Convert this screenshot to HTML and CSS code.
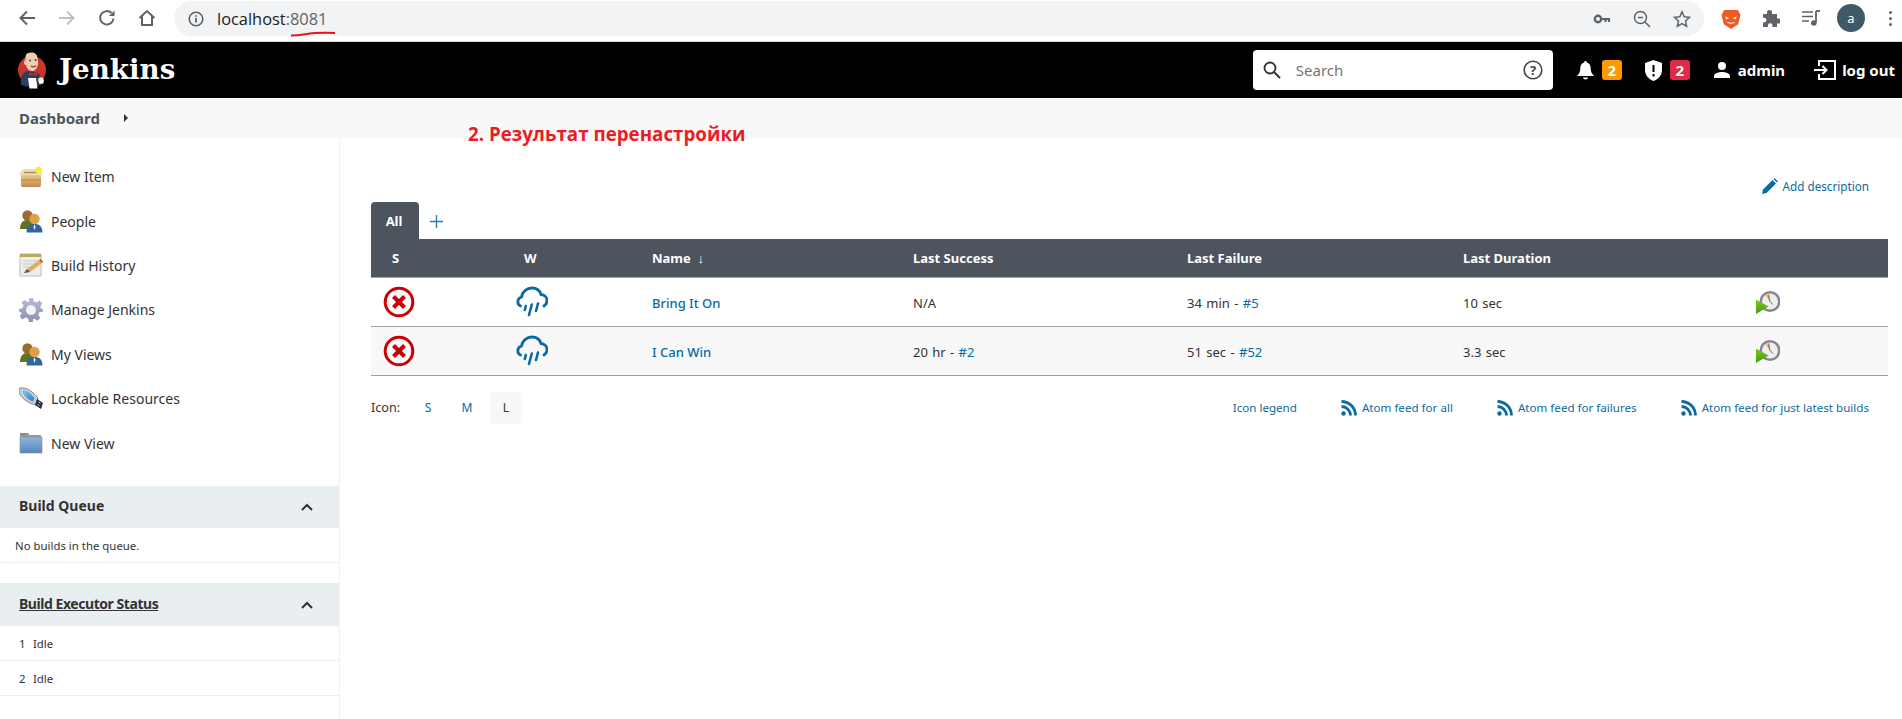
FILE: index.html
```html
<!DOCTYPE html>
<html lang="en">
<head>
<meta charset="utf-8">
<title>Dashboard [Jenkins]</title>
<link rel="stylesheet" href="styles.css">
</head>
<body>
<svg class="defs" width="0" height="0" aria-hidden="true">
  <defs>
    <linearGradient id="gBox" x1="0" y1="0" x2="0" y2="1"><stop offset="0" stop-color="#eec78a"/><stop offset="1" stop-color="#c08a45"/></linearGradient>
    <linearGradient id="gFolder" x1="0" y1="0" x2="0" y2="1"><stop offset="0" stop-color="#8fb4dc"/><stop offset="1" stop-color="#5a86bb"/></linearGradient>
    <linearGradient id="gGear" x1="0" y1="0" x2="0" y2="1"><stop offset="0" stop-color="#b9b9d6"/><stop offset="1" stop-color="#8f8fb4"/></linearGradient>
    <linearGradient id="gUsb" x1="0" y1="0" x2="1" y2="1"><stop offset="0" stop-color="#7cc4ee"/><stop offset="1" stop-color="#2d7fc6"/></linearGradient>
    <linearGradient id="gPlay" x1="0" y1="0" x2="0" y2="1"><stop offset="0" stop-color="#7ccc1e"/><stop offset="1" stop-color="#3f9a12"/></linearGradient>
    <symbol id="people" viewBox="0 0 24 24">
      <circle cx="8.500" cy="6.500" r="5.200" fill="#9a6b2c"/>
      <path d="M1 20c0-6 3-9 7.500-9s7 3 7 9z" fill="#5f7323"/>
      <circle cx="15.500" cy="10" r="5.200" fill="#e0a04a"/>
      <path d="M7.500 23.500c0-6 3-8.500 8-8.500s8 2.500 8 8.500z" fill="#30659f"/>
      <path d="M15.500 15l-1 3 1 3 1-3z" fill="#fff"/>
    </symbol>
    <symbol id="rain" viewBox="0 0 32 32">
      <path d="M4.500 20C1 18.500.5 12.500 5.500 11 6.500 5.500 11 2 16 2c4.500 0 7.800 2.500 9 6.500 3.500.2 6 3 6 6.200 0 2.300-1 4-3 5.300" fill="none" stroke="#0b6aa2" stroke-width="2.800" stroke-linecap="round"/>
      <path d="M9.800 20l-1 4M15.800 18.500l-2.800 10.500M22 17.500l-2 7.500" fill="none" stroke="#0b6aa2" stroke-width="2.600" stroke-linecap="round"/>
    </symbol>
    <symbol id="failed" viewBox="0 0 32 32">
      <circle cx="16" cy="16" r="13.800" fill="#fff" stroke="#cc0003" stroke-width="3"/>
      <path d="M10.500 10.500l11 11M21.500 10.500l-11 11" stroke="#cc0003" stroke-width="4.200"/>
    </symbol>
    <symbol id="clock" viewBox="0 0 24 24">
      <circle cx="14" cy="11.500" r="10.500" fill="#85829a"/>
      <circle cx="14" cy="11.500" r="8" fill="#efefef"/>
      <path d="M14 11.500V3.500a8 8 0 0 0-5 1.800z" fill="#e4c35f"/>
      <path d="M14 11.500l-1.500-6M14 11.500l3 3" stroke="#666" stroke-width="1"/>
      <path d="M0 9.500l12.500 7L0 24z" fill="url(#gPlay)"/>
    </symbol>
    <symbol id="feed" viewBox="0 0 16 16">
      <circle cx="2.500" cy="13.500" r="2.200" fill="#0b6aa2"/>
      <path d="M.5 6.500a9 9 0 0 1 9 9M.5 1.500a14 14 0 0 1 14 14" fill="none" stroke="#0b6aa2" stroke-width="2.800"/>
    </symbol>
    <symbol id="chev" viewBox="0 0 14 14">
      <path d="M2 10l5-5 5 5" fill="none" stroke="#333" stroke-width="2"/>
    </symbol>
  </defs>
</svg>

<div class="chrome">
  <div class="nav-icons">
    <svg class="ci" viewBox="0 0 18 18"><path d="M17 9H3M9 2.500L2.500 9 9 15.500" fill="none" stroke="#5f6368" stroke-width="2"/></svg>
    <svg class="ci" viewBox="0 0 18 18"><path d="M1 9h14M9 2.500L15.500 9 9 15.500" fill="none" stroke="#bdc1c6" stroke-width="2"/></svg>
    <svg class="ci" viewBox="0 0 18 18"><path d="M15.500 9.500A6.700 6.700 0 1 1 13.500 4" fill="none" stroke="#5f6368" stroke-width="2"/><path d="M16.500 1.500V7h-5.500z" fill="#5f6368"/></svg>
    <svg class="ci" viewBox="0 0 18 18"><path d="M1.500 9L9 2l7.500 7M4 7.500V16h10V7.500" fill="none" stroke="#5f6368" stroke-width="2"/></svg>
  </div>
  <div class="omnibox">
    <svg class="info" viewBox="0 0 16 16"><circle cx="8" cy="8" r="6.800" fill="none" stroke="#5f6368" stroke-width="1.600"/><path d="M8 7v4.500M8 4.200v1.600" stroke="#5f6368" stroke-width="1.800"/></svg>
    <span class="url">localhost<span class="port">:8081</span></span>
    <span class="spacer"></span>
    <svg class="oi" viewBox="0 0 18 18"><circle cx="5" cy="9" r="3.200" fill="none" stroke="#5f6368" stroke-width="2.400"/><path d="M8 9h9M12.500 9v3M16 9v3" stroke="#5f6368" stroke-width="2.200"/></svg>
    <svg class="oi" viewBox="0 0 18 18"><circle cx="7.500" cy="7.500" r="6" fill="none" stroke="#5f6368" stroke-width="1.500"/><path d="M12 12l5 5M5 7.500h5" stroke="#5f6368" stroke-width="1.500"/></svg>
    <svg class="oi" viewBox="0 0 18 18"><path d="M9 1.800l2.200 4.900 5.300.6-4 3.600 1.100 5.300L9 13.500l-4.600 2.700 1.100-5.300-4-3.600 5.300-.6z" fill="none" stroke="#5f6368" stroke-width="1.500"/></svg>
  </div>
  <div class="ext-icons">
    <svg class="ext" viewBox="0 0 20 22"><path d="M3 2h14l3 5-2.500 10L10 22 2.500 17 0 7z" fill="#ef5a22"/><path d="M4 9l4 1.500-3 1.500zM16 9l-4 1.500 3 1.500zM5 14c3 2 7 2 10 0-2 3.500-8 3.500-10 0z" fill="#fff"/></svg>
    <svg class="ext" viewBox="0 0 18 18"><path d="M1 5h4V3.500a2.500 2.500 0 0 1 5 0V5h5v4.500h1.500a2.500 2.500 0 0 1 0 5H15V18h-4.500v-1.500a2.300 2.300 0 0 0-4.600 0V18H1v-4.500h1a2.400 2.400 0 0 0 0-4.800H1z" fill="#5f6368"/></svg>
    <svg class="ext" viewBox="0 0 18 18"><path d="M0 3h11M0 7.500h11M0 12h7" stroke="#5f6368" stroke-width="1.600"/><path d="M14 2v11.500" stroke="#5f6368" stroke-width="1.800"/><circle cx="11.800" cy="14" r="2.800" fill="#5f6368"/><path d="M14 2h4" stroke="#5f6368" stroke-width="1.800"/></svg>
    <span class="avatar">a</span>
    <span class="dots"><i></i><i></i><i></i></span>
  </div>
</div>

<header class="topbar">
  <svg class="logo" viewBox="0 0 28 38">
    <circle cx="14" cy="19" r="14" fill="#c8352d"/>
    <path d="M3 34c-1-7 1-12 6-14l9 1c5 2 6 6 5 13l-8 3z" fill="#26435e"/>
    <path d="M9 2.500c5-2 10-1 10.500 4.500.5 3 1 5 .5 6.500-1 4-3 6.500-6 6.500-3 0-5.500-3-6-6-1.500 0-2.500-1.500-2-3.500.3-1 1-1 1.500-.8C7 7 7.500 3.500 9 2.500z" fill="#f2cdb0"/>
    <path d="M6.500 11c0-2 .3-3.500 1-4.800l1.300.8c-.5 1.300-.8 2.800-.8 4.500z" fill="#b9b2a8"/>
    <circle cx="12" cy="9.500" r=".9" fill="#333"/>
    <circle cx="17.500" cy="9" r=".9" fill="#333"/>
    <path d="M13 15c1.500 1 3.500 1 5-.3" fill="none" stroke="#8a3b2b" stroke-width="1.200"/>
    <path d="M11 21.500l4 1.500 4-2.500v4.500l-4-1.500-4 1.500z" fill="#d3202a"/>
    <path d="M10 27h8l1.500 10.500h-8z" fill="#fff"/>
    <circle cx="23" cy="29" r="2.800" fill="#f4ddc6"/>
    <path d="M20.500 30l5-1v3.500l-4 .5z" fill="#fff"/>
  </svg>
  <span class="brand">Jenkins</span>
  <span class="spacer"></span>
  <div class="searchbox">
    <svg class="s-ico" viewBox="0 0 18 18"><circle cx="7" cy="7" r="5.500" fill="none" stroke="#333" stroke-width="1.800"/><path d="M11 11l6 6" stroke="#333" stroke-width="2"/></svg>
    <span class="s-text">Search</span>
    <span class="spacer"></span>
    <svg class="s-help" viewBox="0 0 20 20"><circle cx="10" cy="10" r="8.800" fill="none" stroke="#444" stroke-width="1.600"/><text x="10" y="14.500" class="help-q">?</text></svg>
  </div>
  <div class="alerts">
    <svg class="bell" viewBox="0 0 17 20"><path d="M8.500 1c-.8 0-1.300.6-1.300 1.400C4.600 3 3.300 5 3.300 8c0 4-1 5.500-3 7.500V16h16.400v-.5c-2-2-3-3.500-3-7.500 0-3-1.300-5-3.900-5.600C9.800 1.600 9.300 1 8.500 1zM6 17.500a2.500 2 0 0 0 5 0z" fill="#fff"/></svg>
    <span class="badge badge-orange">2</span>
    <svg class="shield" viewBox="0 0 17 21"><path d="M8.500 0L17 3v7c0 5-3.500 9-8.500 11C3.500 19 0 15 0 10V3z" fill="#fff"/><path d="M8.500 5v7M8.500 14v2.500" stroke="#000" stroke-width="2"/></svg>
    <span class="badge badge-red">2</span>
    <svg class="user" viewBox="0 0 16 16"><circle cx="8" cy="4" r="4" fill="#fff"/><path d="M0 16v-2c0-2.700 5-4 8-4s8 1.300 8 4v2z" fill="#fff"/></svg>
    <span class="who">admin</span>
    <svg class="logout" viewBox="0 0 22 20"><path d="M5 6V1h16v18H5v-5" fill="none" stroke="#fff" stroke-width="2"/><path d="M0 10h12M8.500 6l4 4-4 4" fill="none" stroke="#fff" stroke-width="2"/></svg>
    <span class="who who-out">log out</span>
  </div>
</header>

<nav class="crumbs"><span class="crumb">Dashboard</span><span class="crumb-arrow"></span></nav>

<div class="note">2. Результат перенастройки</div>
<svg class="scribble" viewBox="0 0 46 6"><path d="M1 4.500c8 .5 14-2 24-2.500 7-.3 13-.5 20 0" fill="none" stroke="#e8141c" stroke-width="2"/></svg>

<div class="layout">
  <aside class="side">
    <ul class="tasks">
      <li class="task">
        <svg class="task-ico" viewBox="0 0 24 24"><path d="M0 9l4-5h16l4 5-3 2H3z" fill="#f3dcb3"/><path d="M2 10h20v10a2 2 0 0 1-2 2H4a2 2 0 0 1-2-2z" fill="url(#gBox)"/><path d="M5 7.500h13" stroke="#b98a4f" stroke-width="1.500"/><path d="M2 15h20" stroke="#a8743a" stroke-width=".7"/><circle cx="19.500" cy="5" r="3.300" fill="#f7ee3a"/></svg>
        New Item
      </li>
      <li class="task"><svg class="task-ico"><use href="#people"/></svg>People</li>
      <li class="task">
        <svg class="task-ico" viewBox="0 0 24 24"><path d="M1 1h21v22H1z" fill="#eeeeea" stroke="#bdbdbd"/><path d="M1 1h21v3H1z" fill="#b8ab62"/><path d="M4 8h15M4 11h15M4 14h8" stroke="#c8c8c8"/><path d="M5 20l3-4L20 7l3 3-12 9z" fill="#dcb062"/><path d="M20 7l3 3 1-1.500-2.500-2.500z" fill="#d33"/><path d="M5 20l3-4 3 3z" fill="#555"/></svg>
        Build History
      </li>
      <li class="task">
        <svg class="task-ico" viewBox="0 0 24 24"><path d="M10 0h4l.8 3.500 2.700 1.100 3-2 2.800 2.800-2 3 1.100 2.700L24 11v2.500l-3.600.8-1.100 2.700 2 3-2.800 2.800-3-2-1.700.7L14 24h-4l-.800-3.500-2.700-1.100-3 2-2.800-2.800 2-3L1.600 14 0 13.500V11l3.500-.8 1.100-2.700-2-3 2.800-2.500 3 2 1.800-.8z" fill="url(#gGear)"/><circle cx="12" cy="12" r="5" fill="#f2f2f6"/></svg>
        Manage Jenkins
      </li>
      <li class="task"><svg class="task-ico"><use href="#people"/></svg>My Views</li>
      <li class="task">
        <svg class="task-ico" viewBox="0 0 24 24"><path d="M1 1c7-1 13 4 18 10l-2 7C10 17 0 10 0 4z" fill="#c9ced6" stroke="#6b7280" stroke-width=".8"/><path d="M3.500 3.500c5 0 9 3 12 8l-1.500 3C9 13 4.500 9 3.500 3.500z" fill="url(#gUsb)"/><path d="M18 12l6 4-2 6-6-4z" fill="#2b2b2b"/><path d="M19.500 15l2 1.300M18.500 17.500l2 1.300" stroke="#ddd" stroke-width="1"/></svg>
        Lockable Resources
      </li>
      <li class="task">
        <svg class="task-ico" viewBox="0 0 24 24"><path d="M1 2h8l2 3h-10z" fill="#8b8b8b"/><path d="M1 4h21v2H1z" fill="#999"/><path d="M1 6h22v16H1z" fill="url(#gFolder)" stroke="#8a8f96" stroke-width=".6"/></svg>
        New View
      </li>
    </ul>

    <section class="pane pane-queue">
      <div class="pane-head"><span class="pane-title">Build Queue</span><svg class="chev"><use href="#chev"/></svg></div>
      <div class="pane-row pane-row-q">No builds in the queue.</div>
    </section>

    <section class="pane pane-exec">
      <div class="pane-head pane-head-tall"><span class="pane-title u">Build Executor Status</span><svg class="chev"><use href="#chev"/></svg></div>
      <div class="pane-row"><span class="num">1</span>Idle</div>
      <div class="pane-row"><span class="num">2</span>Idle</div>
    </section>
  </aside>

  <main class="content">
    <div class="desc-row">
      <a class="link add-desc"><svg class="pencil" viewBox="0 0 16 16"><path d="M0 16l1-4.500L10.500 2l3.500 3.500L4.500 15zM11.500 1l1-1 3.500 3.500-1 1z" fill="#0b6aa2"/></svg>Add description</a>
    </div>
    <div class="tabs">
      <span class="tab">All</span>
      <svg class="plus" viewBox="0 0 13 13"><path d="M6.500 0v13M0 6.500h13" stroke="#2b7cb3" stroke-width="1.400"/></svg>
    </div>
    <table class="jobs">
      <colgroup>
        <col class="c1"><col class="c2"><col class="c3"><col class="c4"><col class="c5"><col class="c6"><col>
      </colgroup>
      <thead>
        <tr>
          <th class="th-s">S</th><th class="th-w">W</th><th>Name&nbsp; ↓&nbsp;</th><th>Last Success</th><th>Last Failure</th><th>Last Duration</th><th></th>
        </tr>
      </thead>
      <tbody>
        <tr>
          <td class="td-s"><svg class="status"><use href="#failed"/></svg></td>
          <td class="td-w"><svg class="status"><use href="#rain"/></svg></td>
          <td><a class="link job">Bring It On</a></td>
          <td>N/A</td>
          <td>34 min - <a class="link">#5</a></td>
          <td>10 sec</td>
          <td><svg class="clock"><use href="#clock"/></svg></td>
        </tr>
        <tr class="alt">
          <td class="td-s"><svg class="status"><use href="#failed"/></svg></td>
          <td class="td-w"><svg class="status"><use href="#rain"/></svg></td>
          <td><a class="link job">I Can Win</a></td>
          <td>20 hr - <a class="link">#2</a></td>
          <td>51 sec - <a class="link">#52</a></td>
          <td>3.3 sec</td>
          <td><svg class="clock"><use href="#clock"/></svg></td>
        </tr>
      </tbody>
    </table>
    <div class="foot">
      <div class="sizes">
        <span class="size-label">Icon:</span>
        <a class="size link">S</a><a class="size link">M</a><span class="size size-on">L</span>
      </div>
      <div class="feeds">
        <a class="link">Icon legend</a>
        <a class="link feed"><svg class="feed-ico"><use href="#feed"/></svg>Atom feed for all</a>
        <a class="link feed"><svg class="feed-ico"><use href="#feed"/></svg>Atom feed for failures</a>
        <a class="link feed"><svg class="feed-ico"><use href="#feed"/></svg>Atom feed for just latest builds</a>
      </div>
    </div>
  </main>
</div>
</body>
</html>
```

FILE: styles.css
```css
* { box-sizing: border-box; }
html, body { margin: 0; padding: 0; }
body {
  width: 1902px;
  height: 719px;
  overflow: hidden;
  background: #fff;
  color: #333;
  font-family: "Noto Sans", "Open Sans", sans-serif;
  font-size: 13px;
  position: relative;
}
.defs { position: absolute; }
.spacer { flex: 1; }

/* browser chrome */
.chrome {
  height: 42px;
  display: flex;
  align-items: flex-start;
  background: #fff;
  border-bottom: 1px solid #d8d9db;
}
.nav-icons { display: flex; gap: 22px; padding: 9px 0 0 18px; width: 174px; }
.ci { width: 18px; height: 18px; display: block; }
.omnibox {
  width: 1530px;
  height: 35px;
  margin-top: 1px;
  background: #f1f3f4;
  border-radius: 18px;
  display: flex;
  align-items: center;
  padding: 0 13px 0 14px;
}
.info { width: 16px; height: 16px; }
.url { margin-left: 13px; font-size: 16.4px; color: #202124; font-family: "Open Sans", sans-serif; }
.port { color: #5f6368; }
.oi { width: 18px; height: 18px; margin-left: 22px; }
.ext-icons { display: flex; align-items: center; height: 36px; padding-left: 17px; }
.ext { width: 20px; height: 21px; margin-right: 21px; }
.ext:nth-child(2), .ext:nth-child(3) { width: 18px; height: 18px; margin-right: 22px; }
.ext:nth-child(3) { margin-right: 17px; }
.avatar {
  width: 28px; height: 28px;
  border-radius: 50%;
  background: #3e5967;
  color: #fff;
  font-size: 13px;
  display: flex; align-items: center; justify-content: center;
}
.dots { display: flex; flex-direction: column; gap: 3px; margin-left: 24px; }
.dots i { display: block; width: 3px; height: 3px; border-radius: 50%; background: #5f6368; }

/* Jenkins header */
.topbar {
  height: 56px;
  background: #000;
  display: flex;
  align-items: center;
  padding: 0 7px 0 18px;
  color: #fff;
}
.logo { width: 28px; height: 38px; }
.brand {
  margin-left: 13px;
  font-family: "DejaVu Serif", "Liberation Serif", serif;
  font-weight: 700;
  font-size: 27.7px;
  line-height: 1;
}
.searchbox {
  width: 300px; height: 40px;
  background: #fff;
  border-radius: 4px;
  display: flex; align-items: center;
  padding: 0 10px;
}
.s-ico { width: 18px; height: 18px; }
.s-text { margin-left: 15px; font-size: 15px; color: #757575; }
.s-help { width: 20px; height: 20px; }
.help-q { font: 700 13px "Noto Sans", sans-serif; fill: #444; text-anchor: middle; }
.alerts { display: flex; align-items: center; margin-left: 24px; }
.bell { width: 17px; height: 20px; }
.badge {
  width: 20px; height: 20px;
  border-radius: 3px;
  color: #fff;
  font-weight: 700;
  font-size: 15px;
  line-height: 20px;
  text-align: center;
  margin-left: 8px;
}
.badge-orange { background: #fe9a00; }
.badge-red { background: #e02b46; }
.shield { width: 17px; height: 21px; margin-left: 23px; }
.user { width: 16px; height: 16px; margin-left: 24px; }
.who { font-weight: 700; font-size: 15px; margin-left: 8px; }
.logout { width: 22px; height: 20px; margin-left: 29px; }
.who-out { margin-left: 6px; }

/* breadcrumb */
.crumbs {
  height: 40px;
  background: #f8f8f8;
  display: flex;
  align-items: center;
  padding-left: 19px;
}
.crumb { font-weight: 700; font-size: 15px; color: #4d545d; }
.crumb-arrow {
  width: 0; height: 0;
  margin-left: 24px;
  border-left: 4px solid #333;
  border-top: 4px solid transparent;
  border-bottom: 4px solid transparent;
}
.note {
  position: absolute;
  left: 468px; top: 120px;
  color: #ec1c24;
  font-family: "Open Sans", sans-serif;
  font-weight: 700;
  font-size: 18.75px;
  line-height: 28px;
}
.scribble { position: absolute; left: 290px; top: 31px; width: 46px; height: 6px; }

/* layout */
.layout { display: flex; height: 581px; }
.side { width: 340px; flex: none; border-right: 1px solid #eef2f4; }
.tasks { list-style: none; margin: 0; padding: 16.5px 0 0; height: 348px; }
.task {
  height: 44.4px;
  display: flex;
  align-items: center;
  gap: 8px;
  padding-left: 19px;
  font-size: 14px;
  color: #333;
}
.task-ico { width: 24px; height: 24px; flex: none; }

.pane-head {
  height: 42px;
  background: #e9eef1;
  display: flex;
  align-items: center;
  justify-content: space-between;
  padding: 0 25px 0 19px;
  font-weight: 700;
  font-size: 14px;
  color: #333;
}
.pane-title { padding-bottom: 3px; }
.pane-head-tall { height: 43px; }
.pane-head-tall .pane-title { letter-spacing: -.45px; padding-bottom: 0; margin-bottom: 3px; }
.chev { width: 14px; height: 14px; }
.u { text-decoration: underline; }
.pane-row {
  height: 35px;
  display: flex;
  align-items: center;
  padding-left: 19px;
  font-size: 11.4px;
  border-bottom: 1px solid #e9eef1;
  color: #333;
}
.pane-row-q { padding-left: 15px; }
.num { width: 14px; }
.pane-exec { margin-top: 20px; }

/* main */
.content { flex: 1; padding: 0 14px 0 31px; }
.link { color: #0b6aa2; text-decoration: none; }
.desc-row { display: flex; justify-content: flex-end; height: 64px; padding: 39px 19px 0 0; font-size: 11.7px; }
.add-desc { display: flex; align-items: center; gap: 5px; height: 18px; }
.pencil { width: 16px; height: 16px; }
.tabs { display: flex; align-items: center; height: 37px; }
.tab {
  width: 48px; height: 37px;
  background: #4d545d;
  color: #fff;
  font-weight: 700;
  font-size: 13px;
  border-radius: 4px 4px 0 0;
  display: flex; align-items: center; justify-content: center;
  padding-right: 2px;
}
.plus { width: 13px; height: 13px; margin: 2px 0 0 11px; }

.jobs { width: 100%; border-collapse: collapse; table-layout: fixed; font-size: 13px; word-spacing: 1px; }
.c1 { width: 145px; }
.c2 { width: 136px; }
.c3 { width: 261px; }
.c4 { width: 274px; }
.c5 { width: 276px; }
.c6 { width: 293px; }
.jobs th {
  height: 38px;
  background: #4d545d;
  color: #fff;
  text-align: left;
  font-weight: 700;
  padding: 1px 0 0;
  border-bottom: 1px solid #96a3ad;
  word-spacing: 0;
}
.jobs .th-s { padding-left: 21px; }
.jobs .th-w { padding-left: 8px; }
.jobs td {
  height: 49px;
  padding: 2px 0 0;
  border-bottom: 1px solid #96a3ad;
  color: #333;
}
.jobs td .link { color: #0b6aa2; }
.jobs .td-s { padding: 0 0 0 12px; }
.jobs .td-w { padding: 0; }
.alt td { background: #f8f8f8; }
.status { width: 32px; height: 32px; display: block; }
.clock { width: 24px; height: 24px; display: block; margin-bottom: 1px; }
.job { font-weight: 500; word-spacing: 0; }

.foot {
  display: flex;
  justify-content: space-between;
  align-items: center;
  height: 32px;
  margin-top: 16px;
  padding-right: 19px;
}
.sizes { display: flex; align-items: center; font-size: 12px; }
.size-label { width: 41px; font-size: 12.6px; }
.size { width: 32px; height: 32px; margin-right: 7px; display: flex; align-items: center; justify-content: center; border-radius: 4px; }
.size-on { background: #f8f8f8; color: #333; }
.feeds { display: flex; align-items: center; gap: 44px; font-size: 11.6px; }
.feed { display: flex; align-items: center; gap: 5px; }
.feed-ico { width: 16px; height: 16px; }
```
